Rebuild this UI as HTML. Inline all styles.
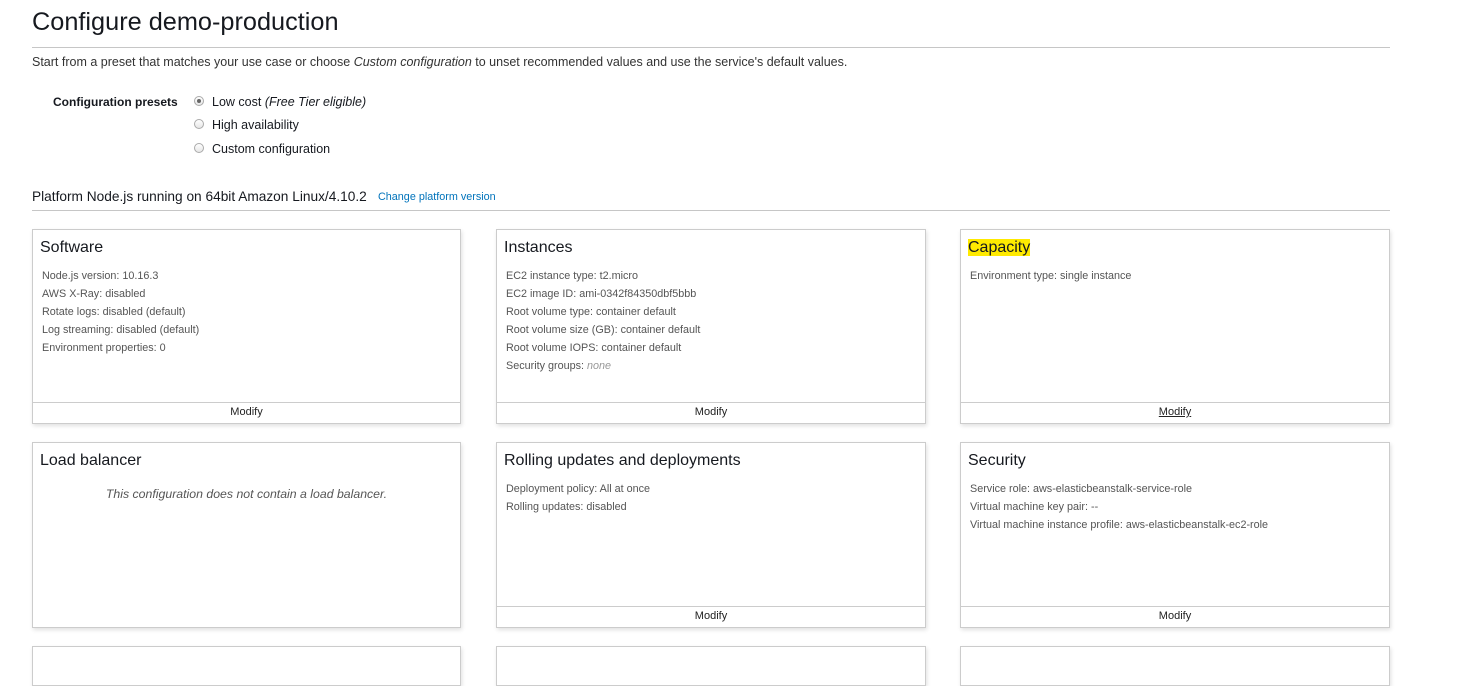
<!DOCTYPE html>
<html><head><meta charset="utf-8"><style>
*{box-sizing:border-box}
body{margin:0;width:1464px;height:651px;overflow:hidden;background:#fff;font-family:"Liberation Sans",sans-serif;color:#16191f;position:relative}
.a{position:absolute;white-space:nowrap}
h1{position:absolute;left:32px;top:8px;margin:0;font-weight:400;font-size:25.3px;color:#16191f}
.hr{position:absolute;left:32px;width:1358px;height:1px;background:#c6c6c6}
.radio{position:absolute;width:10px;height:10px;border:1px solid #aaa;border-radius:50%;background:linear-gradient(#fff,#e6e6e6)}
.radio.on::after{content:"";position:absolute;left:2px;top:2px;width:4px;height:4px;border-radius:50%;background:#666}
.card{position:absolute;border:1px solid #ccc;background:#fff;box-shadow:1px 2px 4px rgba(0,0,0,.12)}
.card h3{margin:0;position:absolute;left:7px;top:9px;font-weight:400;font-size:16px;color:#16191f}
.card .b{position:absolute;left:9px;top:37px;font-size:10.8px;color:#555;line-height:18px}
.card .f{position:absolute;left:0;right:0;bottom:0;height:21px;border-top:1px solid #ccc;text-align:center;font-size:11px;line-height:19px;color:#222}
</style></head><body>
<h1>Configure demo-production</h1>
<div class="hr" style="top:47px"></div>
<div class="a" style="left:32px;top:55px;font-size:12.5px;color:#333">Start from a preset that matches your use case or choose <i>Custom configuration</i> to unset recommended values and use the service's default values.</div>
<div class="a" style="left:53px;top:95px;font-size:12px;font-weight:bold">Configuration presets</div>
<div class="radio on" style="left:194px;top:96px"></div>
<div class="a" style="left:212px;top:95px;font-size:12.5px">Low cost <i>(Free Tier eligible)</i></div>
<div class="radio" style="left:194px;top:119px"></div>
<div class="a" style="left:212px;top:118px;font-size:12.5px">High availability</div>
<div class="radio" style="left:194px;top:143px"></div>
<div class="a" style="left:212px;top:142px;font-size:12.5px">Custom configuration</div>
<div class="a" style="left:32px;top:189px;font-size:13.7px">Platform Node.js running on 64bit Amazon Linux/4.10.2</div>
<div class="a" style="left:378px;top:191px;font-size:10.8px;color:#0073bb">Change platform version</div>
<div class="hr" style="top:210px"></div>

<div class="card" style="left:32px;top:229px;width:429px;height:195px"><h3>Software</h3><div class="b">Node.js version: 10.16.3<br>AWS X-Ray: disabled<br>Rotate logs: disabled (default)<br>Log streaming: disabled (default)<br>Environment properties: 0</div><div class="f">Modify</div></div>
<div class="card" style="left:496px;top:229px;width:430px;height:195px"><h3>Instances</h3><div class="b">EC2 instance type: t2.micro<br>EC2 image ID: ami-0342f84350dbf5bbb<br>Root volume type: container default<br>Root volume size (GB): container default<br>Root volume IOPS: container default<br>Security groups: <i style="color:#999">none</i></div><div class="f">Modify</div></div>
<div class="card" style="left:960px;top:229px;width:430px;height:195px"><h3><span style="background:#ffea00">Capacity</span></h3><div class="b">Environment type: single instance</div><div class="f"><u>Modify</u></div></div>

<div class="card" style="left:32px;top:442px;width:429px;height:186px"><h3>Load balancer</h3><div class="b" style="left:0;right:0;top:42px;text-align:center;font-size:12.3px;font-style:italic;color:#555">This configuration does not contain a load balancer.</div></div>
<div class="card" style="left:496px;top:442px;width:430px;height:186px"><h3>Rolling updates and deployments</h3><div class="b">Deployment policy: All at once<br>Rolling updates: disabled</div><div class="f">Modify</div></div>
<div class="card" style="left:960px;top:442px;width:430px;height:186px"><h3>Security</h3><div class="b">Service role: aws-elasticbeanstalk-service-role<br>Virtual machine key pair: --<br>Virtual machine instance profile: aws-elasticbeanstalk-ec2-role</div><div class="f">Modify</div></div>

<div class="card" style="left:32px;top:646px;width:429px;height:40px"></div>
<div class="card" style="left:496px;top:646px;width:430px;height:40px"></div>
<div class="card" style="left:960px;top:646px;width:430px;height:40px"></div>
</body></html>
